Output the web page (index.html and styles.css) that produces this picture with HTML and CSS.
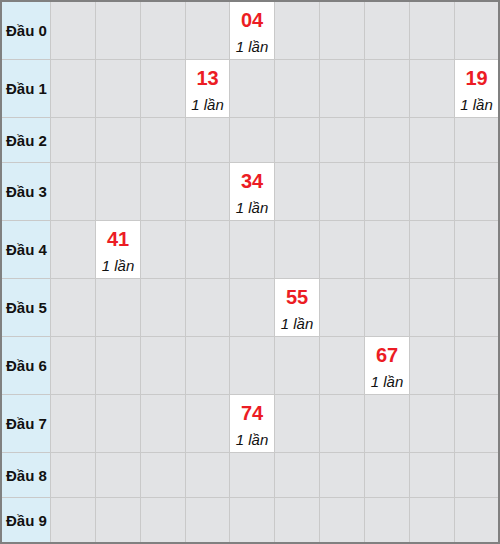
FILE: index.html
```html
<!DOCTYPE html>
<html>
<head>
  <title>Thống kê đầu</title>
  <meta charset="utf-8">
  <link rel="stylesheet" href="styles.css">
</head>
<body>
  <div class="board">
    <div class="head">Đầu 0</div>
    <div class="cell"></div><div class="cell"></div><div class="cell"></div><div class="cell"></div>
    <div class="cell hit"><b>04</b><i>1 lần</i></div>
    <div class="cell"></div><div class="cell"></div><div class="cell"></div><div class="cell"></div><div class="cell"></div>

    <div class="head">Đầu 1</div>
    <div class="cell"></div><div class="cell"></div><div class="cell"></div>
    <div class="cell hit"><b>13</b><i>1 lần</i></div>
    <div class="cell"></div><div class="cell"></div><div class="cell"></div><div class="cell"></div><div class="cell"></div>
    <div class="cell hit"><b>19</b><i>1 lần</i></div>

    <div class="head">Đầu 2</div>
    <div class="cell"></div><div class="cell"></div><div class="cell"></div><div class="cell"></div><div class="cell"></div>
    <div class="cell"></div><div class="cell"></div><div class="cell"></div><div class="cell"></div><div class="cell"></div>

    <div class="head">Đầu 3</div>
    <div class="cell"></div><div class="cell"></div><div class="cell"></div><div class="cell"></div>
    <div class="cell hit"><b>34</b><i>1 lần</i></div>
    <div class="cell"></div><div class="cell"></div><div class="cell"></div><div class="cell"></div><div class="cell"></div>

    <div class="head">Đầu 4</div>
    <div class="cell"></div>
    <div class="cell hit"><b>41</b><i>1 lần</i></div>
    <div class="cell"></div><div class="cell"></div><div class="cell"></div><div class="cell"></div>
    <div class="cell"></div><div class="cell"></div><div class="cell"></div><div class="cell"></div>

    <div class="head">Đầu 5</div>
    <div class="cell"></div><div class="cell"></div><div class="cell"></div><div class="cell"></div><div class="cell"></div>
    <div class="cell hit"><b>55</b><i>1 lần</i></div>
    <div class="cell"></div><div class="cell"></div><div class="cell"></div><div class="cell"></div>

    <div class="head">Đầu 6</div>
    <div class="cell"></div><div class="cell"></div><div class="cell"></div><div class="cell"></div>
    <div class="cell"></div><div class="cell"></div><div class="cell"></div>
    <div class="cell hit"><b>67</b><i>1 lần</i></div>
    <div class="cell"></div><div class="cell"></div>

    <div class="head">Đầu 7</div>
    <div class="cell"></div><div class="cell"></div><div class="cell"></div><div class="cell"></div>
    <div class="cell hit"><b>74</b><i>1 lần</i></div>
    <div class="cell"></div><div class="cell"></div><div class="cell"></div><div class="cell"></div><div class="cell"></div>

    <div class="head">Đầu 8</div>
    <div class="cell"></div><div class="cell"></div><div class="cell"></div><div class="cell"></div><div class="cell"></div>
    <div class="cell"></div><div class="cell"></div><div class="cell"></div><div class="cell"></div><div class="cell"></div>

    <div class="head">Đầu 9</div>
    <div class="cell"></div><div class="cell"></div><div class="cell"></div><div class="cell"></div><div class="cell"></div>
    <div class="cell"></div><div class="cell"></div><div class="cell"></div><div class="cell"></div><div class="cell"></div>
  </div>
</body>
</html>
```

FILE: styles.css
```css
body {
  margin: 0;
  font-family: "Liberation Sans", Arial, sans-serif;
}

.board {
  box-sizing: border-box;
  width: 500px;
  height: 544px;
  border: 2px solid #808080;
  background-color: #c9c9c9;
  display: grid;
  grid-template-columns: 48px repeat(3, 44px) 43px repeat(5, 44px) 43px;
  grid-auto-rows: minmax(44px, auto);
  gap: 1px;
}

.head {
  background-color: #daeef7;
  display: flex;
  align-items: center;
  padding-left: 4px;
  font-size: 15px;
  font-weight: bold;
  color: #111;
  white-space: nowrap;
}

.cell {
  background-color: #e2e3e5;
}

.cell.hit {
  background-color: #fff;
  display: flex;
  flex-direction: column;
  align-items: center;
  padding: 7px 0 4px;
}

.cell.hit b {
  font-size: 20px;
  line-height: 23px;
  color: #ec1c24;
}

.cell.hit i {
  margin-top: 6px;
  font-size: 15px;
  line-height: 17px;
  color: #111;
  white-space: nowrap;
}
```
